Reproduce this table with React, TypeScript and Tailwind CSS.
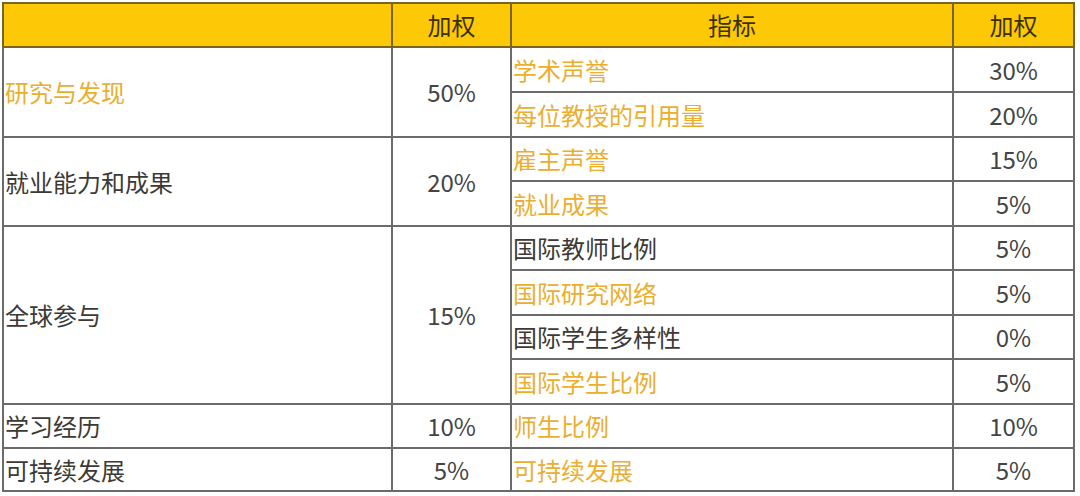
const gold = 'text-[#ebae2f]'
const dark = 'text-[#3d3a35]'

type Sub = { name: string; gold: boolean; weight: string }
type Group = { name: string; gold: boolean; weight: string; subs: Sub[] }

const groups: Group[] = [
  {
    name: '研究与发现',
    gold: true,
    weight: '50%',
    subs: [
      { name: '学术声誉', gold: true, weight: '30%' },
      { name: '每位教授的引用量', gold: true, weight: '20%' },
    ],
  },
  {
    name: '就业能力和成果',
    gold: false,
    weight: '20%',
    subs: [
      { name: '雇主声誉', gold: true, weight: '15%' },
      { name: '就业成果', gold: true, weight: '5%' },
    ],
  },
  {
    name: '全球参与',
    gold: false,
    weight: '15%',
    subs: [
      { name: '国际教师比例', gold: false, weight: '5%' },
      { name: '国际研究网络', gold: true, weight: '5%' },
      { name: '国际学生多样性', gold: false, weight: '0%' },
      { name: '国际学生比例', gold: true, weight: '5%' },
    ],
  },
  {
    name: '学习经历',
    gold: false,
    weight: '10%',
    subs: [{ name: '师生比例', gold: true, weight: '10%' }],
  },
  {
    name: '可持续发展',
    gold: false,
    weight: '5%',
    subs: [{ name: '可持续发展', gold: true, weight: '5%' }],
  },
]

// row heights measured off the picture (lines don't fall on an even grid)
const rowH = ['h-[45px]', 'h-[45px]', 'h-[44px]', 'h-[45px]', 'h-[44px]', 'h-[45px]', 'h-[44px]', 'h-[45px]', 'h-[44px]', 'h-[43px]']

const cell = 'border-2 border-[#6b6b6b] p-0 leading-none'
const head = 'border-2 border-[#7a6420] bg-[#fdc805] h-[44px] p-0 text-[24px] text-[#3b3100] font-normal text-center'

export default function App() {
  let r = 0
  return (
    <div
      className="w-[1080px] h-[496px] bg-white pt-[2px] pl-[2px]"
      style={{ fontFamily: '"Noto Sans CJK SC", "Noto Sans", sans-serif' }}
    >
      <table className="table-fixed border-collapse w-[1073px] text-[24px]">
        <colgroup>
          <col className="w-[389px]" />
          <col className="w-[119px]" />
          <col className="w-[442px]" />
          <col className="w-[121px]" />
        </colgroup>
        <thead>
          <tr>
            <th className={head}></th>
            <th className={head}>加权</th>
            <th className={head}>指标</th>
            <th className={head}>加权</th>
          </tr>
        </thead>
        <tbody>
          {groups.map((g) =>
            g.subs.map((s, i) => (
              <tr key={g.name + s.name} className={rowH[r++]}>
                {i === 0 && (
                  <>
                    <td rowSpan={g.subs.length} className={`${cell} pl-[1px] ${g.gold ? gold : dark}`}>
                      {g.name}
                    </td>
                    <td rowSpan={g.subs.length} className={`${cell} text-center text-[#444]`}>
                      {g.weight}
                    </td>
                  </>
                )}
                <td className={`${cell} pl-[1px] ${s.gold ? gold : dark}`}>{s.name}</td>
                <td className={`${cell} text-center text-[#444]`}>{s.weight}</td>
              </tr>
            ))
          )}
        </tbody>
      </table>
    </div>
  )
}
